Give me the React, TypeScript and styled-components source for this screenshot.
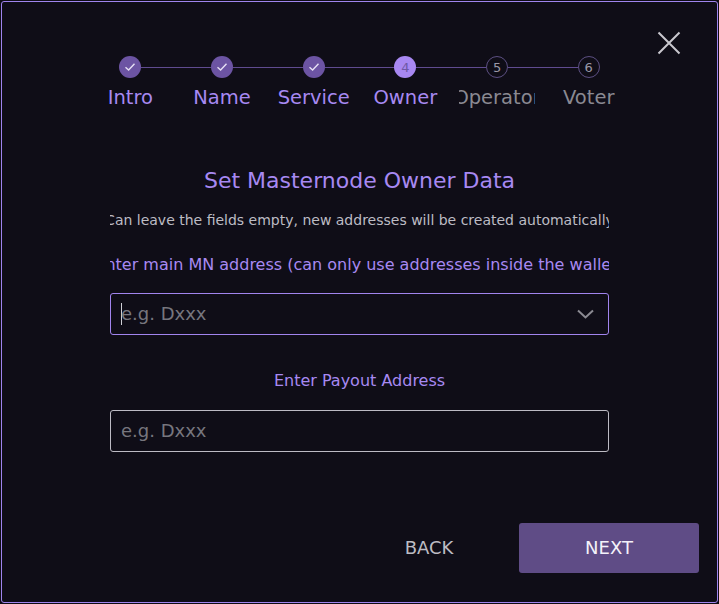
import React from "react";
import styled, { createGlobalStyle } from "styled-components";

const Global = createGlobalStyle`
  html, body { margin: 0; padding: 0; background: #0e0c15; }
  body { font-family: "DejaVu Sans", "Liberation Sans", sans-serif; }
  * { box-sizing: border-box; }
`;

const Dialog = styled.div`
  position: relative;
  margin: 1px 0 0 1px;
  width: 717px;
  height: 602px;
  border: 1px solid #9f84ee;
  border-radius: 3px;
  background: #0f0d17;
  display: flex;
  flex-direction: column;
  align-items: center;
  padding: 54px 18px 29px 0;
`;

const CloseButton = styled.button`
  position: absolute;
  top: 27px;
  right: 34px;
  width: 28px;
  height: 28px;
  padding: 0;
  border: 0;
  background: transparent;
  display: flex;
  align-items: center;
  justify-content: center;
`;

const Stepper = styled.div`
  width: 550px;
  display: flex;
  margin-left: 18px;
`;

const Step = styled.div`
  flex: 1;
  position: relative;
  display: flex;
  flex-direction: column;
  align-items: center;
  padding: 0 8px;
  min-width: 0;
`;

const Connector = styled.div`
  position: absolute;
  top: 11px;
  left: calc(-50% + 11px);
  right: calc(50% + 11px);
  height: 1px;
  background: #5f4b8f;
`;

const Circle = styled.div<{ $state: "done" | "active" | "todo" }>`
  width: 22px;
  height: 22px;
  border-radius: 50%;
  display: flex;
  align-items: center;
  justify-content: center;
  font-size: 13px;
  background: ${(p) =>
    p.$state === "done" ? "#6c54a3" : p.$state === "active" ? "#a888f2" : "transparent"};
  border: ${(p) => (p.$state === "todo" ? "1px solid #5c4f82" : "none")};
  color: ${(p) => (p.$state === "active" ? "#6e58a6" : "#9a98a6")};
`;

const StepLabel = styled.div<{ $muted: boolean }>`
  margin-top: 8px;
  width: 100%;
  display: flex;
  justify-content: center;
  overflow: hidden;
  white-space: nowrap;
  font-size: 19.5px;
  line-height: 24px;
  color: ${(p) => (p.$muted ? "#8a8992" : "#a789f2")};
`;

const Content = styled.div`
  width: 499px;
  display: flex;
  flex-direction: column;
  align-items: stretch;
  margin-left: 18px;
`;

const Title = styled.h2`
  margin: 58px 0 0;
  font-weight: normal;
  font-size: 22px;
  line-height: 26px;
  text-align: center;
  color: #a789f2;
`;

const Clipped = styled.div<{ $size: number; $color: string; $top: number; $lh: number }>`
  margin-top: ${(p) => p.$top}px;
  display: flex;
  justify-content: center;
  overflow: hidden;
  white-space: nowrap;
  font-size: ${(p) => p.$size}px;
  line-height: ${(p) => p.$lh}px;
  color: ${(p) => p.$color};
`;

const Field = styled.div<{ $focused?: boolean; $top: number }>`
  margin-top: ${(p) => p.$top}px;
  height: 42px;
  border: 1px solid ${(p) => (p.$focused ? "#a184ee" : "#bdbbc4")};
  border-radius: 3px;
  display: flex;
  align-items: center;
  padding: 0 14px 0 10px;
`;

const Placeholder = styled.div`
  flex: 1;
  display: flex;
  align-items: center;
  font-size: 18px;
  line-height: 22px;
  padding-bottom: 1px;
  color: #77767e;
`;

const Caret = styled.span`
  display: inline-block;
  width: 1px;
  height: 22px;
  background: #cfcfd6;
  margin-right: -1px;
`;

const TextInput = styled.input`
  flex: 1;
  border: 0;
  outline: none;
  background: transparent;
  font-family: inherit;
  font-size: 18px;
  color: #e0e0e0;
  padding: 0 0 1px;
  &::placeholder { color: #77767e; }
`;

const Actions = styled.div`
  margin-top: auto;
  align-self: flex-end;
  display: flex;
`;

const Button = styled.button<{ $primary?: boolean }>`
  width: 180px;
  height: 50px;
  border: 0;
  border-radius: 3px;
  padding: 0 0 2px;
  font-family: inherit;
  font-size: 18px;
  background: ${(p) => (p.$primary ? "#5f4c86" : "transparent")};
  color: ${(p) => (p.$primary ? "#f4f2fa" : "#bdbcc3")};
`;

const steps = ["Intro", "Name", "Service", "Owner", "Operator", "Voter"];
const current = 3;

const Check = () => (
  <svg width="12" height="10" viewBox="0 0 12 10" fill="none">
    <path d="M1.5 5.2 L4.6 8 L10.5 1.8" stroke="#e6e0f5" strokeWidth="1.4" />
  </svg>
);

export default function App() {
  return (
    <>
      <Global />
      <Dialog>
        <CloseButton aria-label="close">
          <svg width="24" height="24" viewBox="0 0 24 24">
            <path d="M1.5 1.5 L22.5 22.5 M22.5 1.5 L1.5 22.5" stroke="#c9c8ce" strokeWidth="2" />
          </svg>
        </CloseButton>
        <Stepper>
          {steps.map((s, i) => {
            const state = i < current ? "done" : i === current ? "active" : "todo";
            return (
              <Step key={s}>
                {i > 0 && <Connector />}
                <Circle $state={state}>{state === "done" ? <Check /> : i + 1}</Circle>
                <StepLabel $muted={state === "todo"}>{s}</StepLabel>
              </Step>
            );
          })}
        </Stepper>
        <Content>
          <Title>Set Masternode Owner Data</Title>
          <Clipped $size={14} $lh={18} $top={17} $color="#bdbcc4">
            Can leave the fields empty, new addresses will be created automatically
          </Clipped>
          <Clipped $size={16} $lh={20} $top={26} $color="#a789f2">
            Enter main MN address (can only use addresses inside the wallet)
          </Clipped>
          <Field $focused $top={18}>
            <Placeholder>
              <Caret />
              e.g. Dxxx
            </Placeholder>
            <svg width="17" height="10" viewBox="0 0 17 10" fill="none">
              <path d="M1 1.5 L8.5 8.5 L16 1.5" stroke="#8b8a92" strokeWidth="2" />
            </svg>
          </Field>
          <Clipped $size={16} $lh={20} $top={36} $color="#a789f2">
            Enter Payout Address
          </Clipped>
          <Field $top={19}>
            <TextInput placeholder="e.g. Dxxx" />
          </Field>
        </Content>
        <Actions>
          <Button>BACK</Button>
          <Button $primary>NEXT</Button>
        </Actions>
      </Dialog>
    </>
  );
}
